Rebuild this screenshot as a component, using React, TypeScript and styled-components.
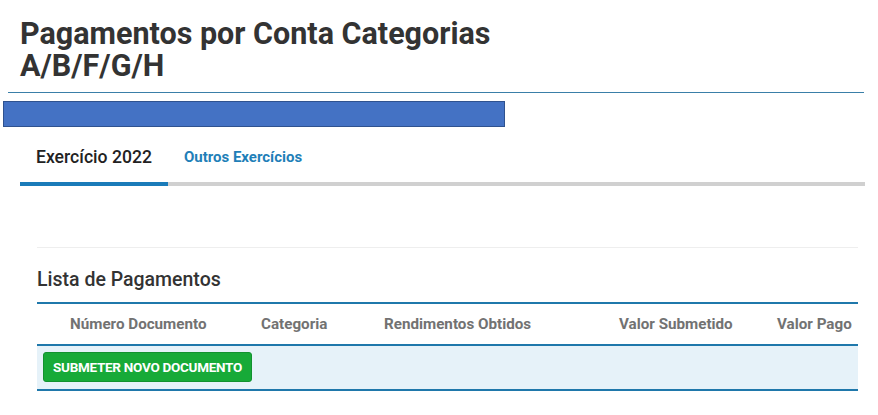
import React from "react";
import styled, { createGlobalStyle } from "styled-components";

const Global = createGlobalStyle`
  html, body { margin: 0; padding: 0; background: #fff; }
  body { font-family: Roboto, "Liberation Sans", Arial, sans-serif; color: #333; }
  * { box-sizing: border-box; }
`;

const Page = styled.div`
  width: 878px;
  height: 415px;
  overflow: hidden;
  display: flex;
  flex-direction: column;
`;

const Title = styled.h1`
  margin: 18px 0 0 20px;
  font-size: 30.5px;
  line-height: 32px;
  font-weight: 700;
  color: #333;
`;

const Rule = styled.hr`
  margin: 10px 14px 0 8px;
  border: 0;
  border-top: 1px solid #3a7fa8;
  height: 0;
`;

const Redaction = styled.div`
  margin: 8px 0 0 3px;
  width: 502px;
  height: 26px;
  background: #4472c4;
  border: 1px solid #2f528f;
`;

const Tabs = styled.div`
  margin: 20px 13px 0 20px;
  display: flex;
  align-items: flex-end;
  border-bottom: 4px solid #d0d0d0;
`;

const Tab = styled.div<{ $active?: boolean }>`
  padding: 0 16px 15px 16px;
  margin-bottom: -4px;
  border-bottom: 4px solid ${(p) => (p.$active ? "#1a7bb9" : "transparent")};
  font-size: ${(p) => (p.$active ? "17.6px" : "15px")};
  font-weight: ${(p) => (p.$active ? 500 : 700)};
  color: ${(p) => (p.$active ? "#222" : "#1f7fb8")};
  line-height: 20px;
  white-space: nowrap;
`;

const Content = styled.div`
  margin: 61px 20px 0 37px;
  border-top: 1px solid #eeeeee;
`;

const SectionTitle = styled.h2`
  margin: 20px 0 0 0;
  font-size: 19.5px;
  line-height: 24px;
  font-weight: 500;
  color: #333;
`;

const Table = styled.div`
  margin-top: 10px;
  border-top: 2px solid #1f78ab;
`;

const HeadRow = styled.div`
  display: grid;
  grid-template-columns: 33px 191px 123px 235px 158px 1fr;
  align-items: center;
  height: 42px;
  border-bottom: 2px solid #1f78ab;
`;

const Th = styled.div<{ $col: number }>`
  grid-column: ${(p) => p.$col};
  font-size: 15.2px;
  font-weight: 700;
  color: #727272;
  white-space: nowrap;
`;

const BodyRow = styled.div`
  background: #e6f2f9;
  padding: 6px 6px;
  height: 45px;
  border-bottom: 2px solid #1f78ab;
`;

const Button = styled.button`
  display: block;
  height: 30px;
  width: 209px;
  padding: 0;
  background: #17aa38;
  border: 1px solid #129230;
  border-radius: 3px;
  color: #fff;
  font-family: Roboto, "Liberation Sans", Arial, sans-serif;
  font-weight: 700;
  font-size: 13.5px;
  letter-spacing: -0.28px;
  text-transform: uppercase;
  white-space: nowrap;
  cursor: pointer;
`;

export default function App() {
  const headers: [number, string][] = [
    [2, "Número Documento"],
    [3, "Categoria"],
    [4, "Rendimentos Obtidos"],
    [5, "Valor Submetido"],
    [6, "Valor Pago"],
  ];
  return (
    <Page>
      <Global />
      <Title>
        Pagamentos por Conta Categorias
        <br />
        A/B/F/G/H
      </Title>
      <Rule />
      <Redaction />
      <Tabs>
        <Tab $active>Exercício 2022</Tab>
        <Tab>Outros Exercícios</Tab>
      </Tabs>
      <Content>
        <SectionTitle>Lista de Pagamentos</SectionTitle>
        <Table>
          <HeadRow>
            {headers.map(([c, t]) => (
              <Th key={t} $col={c}>
                {t}
              </Th>
            ))}
          </HeadRow>
          <BodyRow>
            <Button>Submeter novo documento</Button>
          </BodyRow>
        </Table>
      </Content>
    </Page>
  );
}
